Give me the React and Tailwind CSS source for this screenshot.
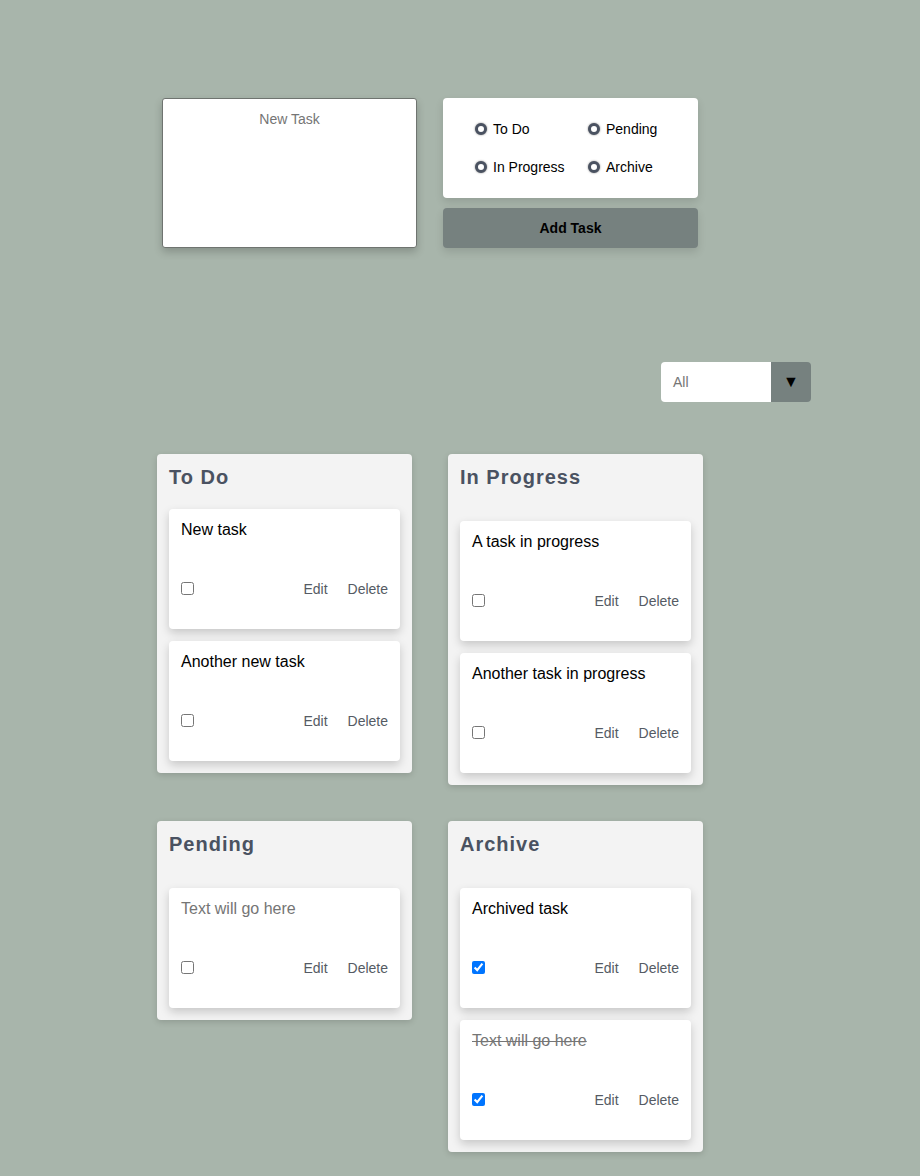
import React from "react";

const columns = [
  {
    title: "To Do",
    gap: "mt-5",
    tasks: [
      { text: "New task" },
      { text: "Another new task" },
    ],
  },
  {
    title: "In Progress",
    gap: "mt-8",
    tasks: [
      { text: "A task in progress" },
      { text: "Another task in progress" },
    ],
  },
  {
    title: "Pending",
    gap: "mt-8",
    tasks: [{ text: "Text will go here", placeholder: true }],
  },
  {
    title: "Archive",
    gap: "mt-8",
    tasks: [
      { text: "Archived task", done: true },
      { text: "Text will go here", done: true, placeholder: true, struck: true },
    ],
  },
];

function Radio({ label }) {
  return (
    <label className="flex items-center gap-[6px] text-[14px] leading-[16px] text-black">
      <span className="h-[12px] w-[12px] rounded-full border-[3px] border-[#4a5261] bg-white shadow-[0_0_2px_rgba(0,0,0,0.5)]" />
      {label}
    </label>
  );
}

function TaskCard({ task }) {
  return (
    <div className="flex h-[120px] flex-col rounded-[4px] bg-white px-3 pt-[12px] shadow-[0_4px_10px_rgba(0,0,0,0.18)]">
      <p
        className={
          "text-[16px] leading-[18px] " +
          (task.placeholder ? "text-[#757575]" : "text-black") +
          (task.struck ? " line-through" : "")
        }
      >
        {task.text}
      </p>
      <div className="mt-[41px] flex h-[18px] items-center">
        <input
          type="checkbox"
          defaultChecked={task.done}
          className="m-0 -mt-px h-[13px] w-[13px] accent-[#0075ff]"
        />
        <div className="ml-auto mt-px flex gap-5 text-[14px] text-[#555b64]">
          <span>Edit</span>
          <span>Delete</span>
        </div>
      </div>
    </div>
  );
}

function Column({ col }) {
  return (
    <div className="flex flex-col rounded-[4px] bg-[#f3f3f3] px-3 pb-3 pt-[12px] shadow-[0_2px_6px_rgba(0,0,0,0.15)]">
      <h2 className="text-[20px] font-bold leading-[23px] tracking-[1px] text-[#4a5261]">
        {col.title}
      </h2>
      <div className={"flex flex-col gap-3 " + col.gap}>
        {col.tasks.map((t, i) => (
          <TaskCard key={i} task={t} />
        ))}
      </div>
    </div>
  );
}

export default function App() {
  return (
    <div
      className="min-h-[1176px] bg-[#a8b5ab] pt-[98px]"
      style={{ fontFamily: '"Liberation Sans", Arial, sans-serif' }}
    >
      <div className="ml-[162px] flex gap-[26px]">
        <textarea
          placeholder="New Task"
          className="h-[150px] w-[255px] resize-none rounded-[3px] border border-[#6f7470] bg-white pt-[10px] text-center text-[14px] shadow-[0_4px_8px_rgba(0,0,0,0.2)] outline-none placeholder:text-[#757575]"
        />
        <div className="flex w-[255px] flex-col gap-[10px]">
          <div className="grid h-[100px] grid-cols-[113px_1fr] content-center gap-y-[22px] rounded-[4px] bg-white pl-[32px] shadow-[0_4px_8px_rgba(0,0,0,0.12)]">
            <Radio label="To Do" />
            <Radio label="Pending" />
            <Radio label="In Progress" />
            <Radio label="Archive" />
          </div>
          <button className="h-[40px] rounded-[4px] bg-[#76817f] text-[14px] font-bold text-black shadow-[0_4px_8px_rgba(0,0,0,0.12)]">
            Add Task
          </button>
        </div>
      </div>

      <div className="ml-[661px] mt-[114px] flex h-[40px] w-[150px] overflow-hidden rounded-[4px]">
        <div className="flex flex-1 items-center bg-white pl-3 text-[14px] text-[#757575]">
          All
        </div>
        <div className="flex w-[40px] items-center justify-center bg-[#76817f] text-[16px] text-black">
          ▼
        </div>
      </div>

      <div className="ml-[157px] mt-[52px] grid w-[546px] grid-cols-[255px_255px] items-start gap-x-[36px] gap-y-[36px] pb-6">
        {columns.map((c) => (
          <Column key={c.title} col={c} />
        ))}
      </div>
    </div>
  );
}
